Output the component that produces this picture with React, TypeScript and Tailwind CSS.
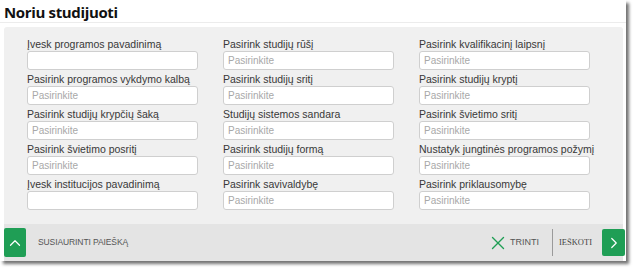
import React from 'react';
import { ChevronUp, ChevronRight, X } from 'lucide-react';

type Field = { label: string; select: boolean };

const fields: Field[] = [
  { label: 'Įvesk programos pavadinimą', select: false },
  { label: 'Pasirink studijų rūšį', select: true },
  { label: 'Pasirink kvalifikacinį laipsnį', select: true },
  { label: 'Pasirink programos vykdymo kalbą', select: true },
  { label: 'Pasirink studijų sritį', select: true },
  { label: 'Pasirink studijų kryptį', select: true },
  { label: 'Pasirink studijų krypčių šaką', select: true },
  { label: 'Studijų sistemos sandara', select: true },
  { label: 'Pasirink švietimo sritį', select: true },
  { label: 'Pasirink švietimo posritį', select: true },
  { label: 'Pasirink studijų formą', select: true },
  { label: 'Nustatyk jungtinės programos požymį', select: true },
  { label: 'Įvesk institucijos pavadinimą', select: false },
  { label: 'Pasirink savivaldybę', select: true },
  { label: 'Pasirink priklausomybę', select: true },
];

const App: React.FC = () => {
  return (
    <div className="w-[634px] h-[271px] bg-white font-['Liberation_Sans',Arial,sans-serif]">
      <div className="w-[626px] h-[261px] bg-white shadow-[3px_3px_3px_rgba(0,0,0,0.55)] flex flex-col">
        {/* Title */}
        <div className="h-[23px] pl-[4px] border-b border-[#ececec] flex items-end">
          <h1 className="font-['Open_Sans',sans-serif] font-bold text-[15px] leading-[20px] text-[#111] tracking-[-0.35px]">
            Noriu studijuoti
          </h1>
        </div>

        {/* Search panel */}
        <div className="mt-[4px] ml-[4px] mr-[3px] flex-1 bg-[#f0f0f0] rounded-[3px] flex flex-col">
          <div className="grid grid-cols-[171px_171px_171px] gap-x-[25px] gap-y-[3px] pl-[23px] pt-[11px]">
            {fields.map((f) => (
              <div key={f.label} className="flex flex-col">
                <label className="text-[10.5px] leading-[12px] h-[12px] mb-[1px] text-[#383838] whitespace-nowrap">
                  {f.label}
                </label>
                <input
                  type="text"
                  placeholder={f.select ? 'Pasirinkite' : ''}
                  className="h-[19px] w-full bg-white border border-[#cfcfcf] rounded-[3px] px-[4px] text-[10px] text-[#333] placeholder:text-[#a8a8a8] outline-none"
                />
              </div>
            ))}
          </div>

          {/* Footer */}
          <div className="mt-auto h-[37px] bg-[#e4e4e4] flex items-center">
            <button className="w-[22px] h-[29px] bg-[#1f9e55] rounded-[2px] flex items-center justify-center">
              <ChevronUp size={18} strokeWidth={1.6} className="text-white" />
            </button>
            <span className="ml-[12px] text-[8.5px] text-[#555] tracking-[-0.1px]">SUSIAURINTI PAIEŠKĄ</span>
            <div className="ml-auto flex items-center h-full">
              <X size={22} strokeWidth={1.5} className="text-[#1f9e55]" />
              <span className="ml-[1px] text-[9px] text-[#555]">TRINTI</span>
              <div className="ml-[13px] w-px h-[27px] bg-[#9a9a9a]" />
              <span className="ml-[6px] text-[8.5px] text-[#444] font-['Liberation_Serif',serif]">IEŠKOTI</span>
              <button className="ml-[10px] -mr-[2px] w-[23px] h-[27px] bg-[#1f9e55] rounded-[2px] flex items-center justify-center">
                <ChevronRight size={18} strokeWidth={1.6} className="text-white" />
              </button>
            </div>
          </div>
        </div>
      </div>
    </div>
  );
};

export default App;
